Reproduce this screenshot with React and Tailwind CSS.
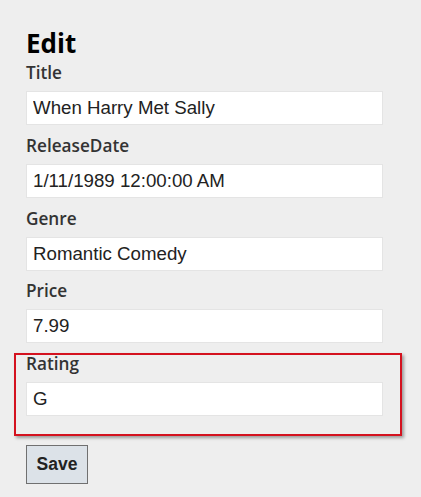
import React from 'react';

const fields = [
  { label: 'Title', value: 'When Harry Met Sally' },
  { label: 'ReleaseDate', value: '1/11/1989 12:00:00 AM' },
  { label: 'Genre', value: 'Romantic Comedy' },
  { label: 'Price', value: '7.99' },
];

const Field = ({ label, value }) => (
  <div>
    <label className="block h-[22px] leading-[22px] text-[17.2px] font-semibold text-[#333333] font-['Open_Sans',sans-serif]">
      {label}
    </label>
    <input
      readOnly
      value={value}
      className="mt-[7px] block h-[34px] w-[357px] border border-[#e4e4e4] bg-white pl-[6px] text-[18.7px] text-[#222222] font-['Liberation_Sans',Arial,sans-serif] outline-none"
    />
  </div>
);

export default function App() {
  return (
    <div className="w-[421px] h-[497px] overflow-hidden bg-[#eeeeee] pl-[26px] pt-[28px]">
      <h2 className="h-[30px] leading-[30px] text-[26px] font-bold text-black font-['Open_Sans',sans-serif]">
        Edit
      </h2>

      <div className="mt-[4px] flex flex-col gap-[9.75px]">
        {fields.map((f) => (
          <Field key={f.label} label={f.label} value={f.value} />
        ))}

        {/* highlighted field */}
        <div className="relative w-[357px]">
          <Field label="Rating" value="G" />
          <div className="pointer-events-none absolute -left-[12px] top-0 -right-[19px] -bottom-[20px] border-2 border-[#d4121f] shadow-[2px_2px_3px_rgba(0,0,0,0.35)]" />
        </div>
      </div>

      <button className="mt-[29px] h-[39px] w-[62px] border border-[#707070] bg-[#dce2e8] text-[17.5px] font-bold text-[#222222] font-['Liberation_Sans',Arial,sans-serif]">
        Save
      </button>
    </div>
  );
}
